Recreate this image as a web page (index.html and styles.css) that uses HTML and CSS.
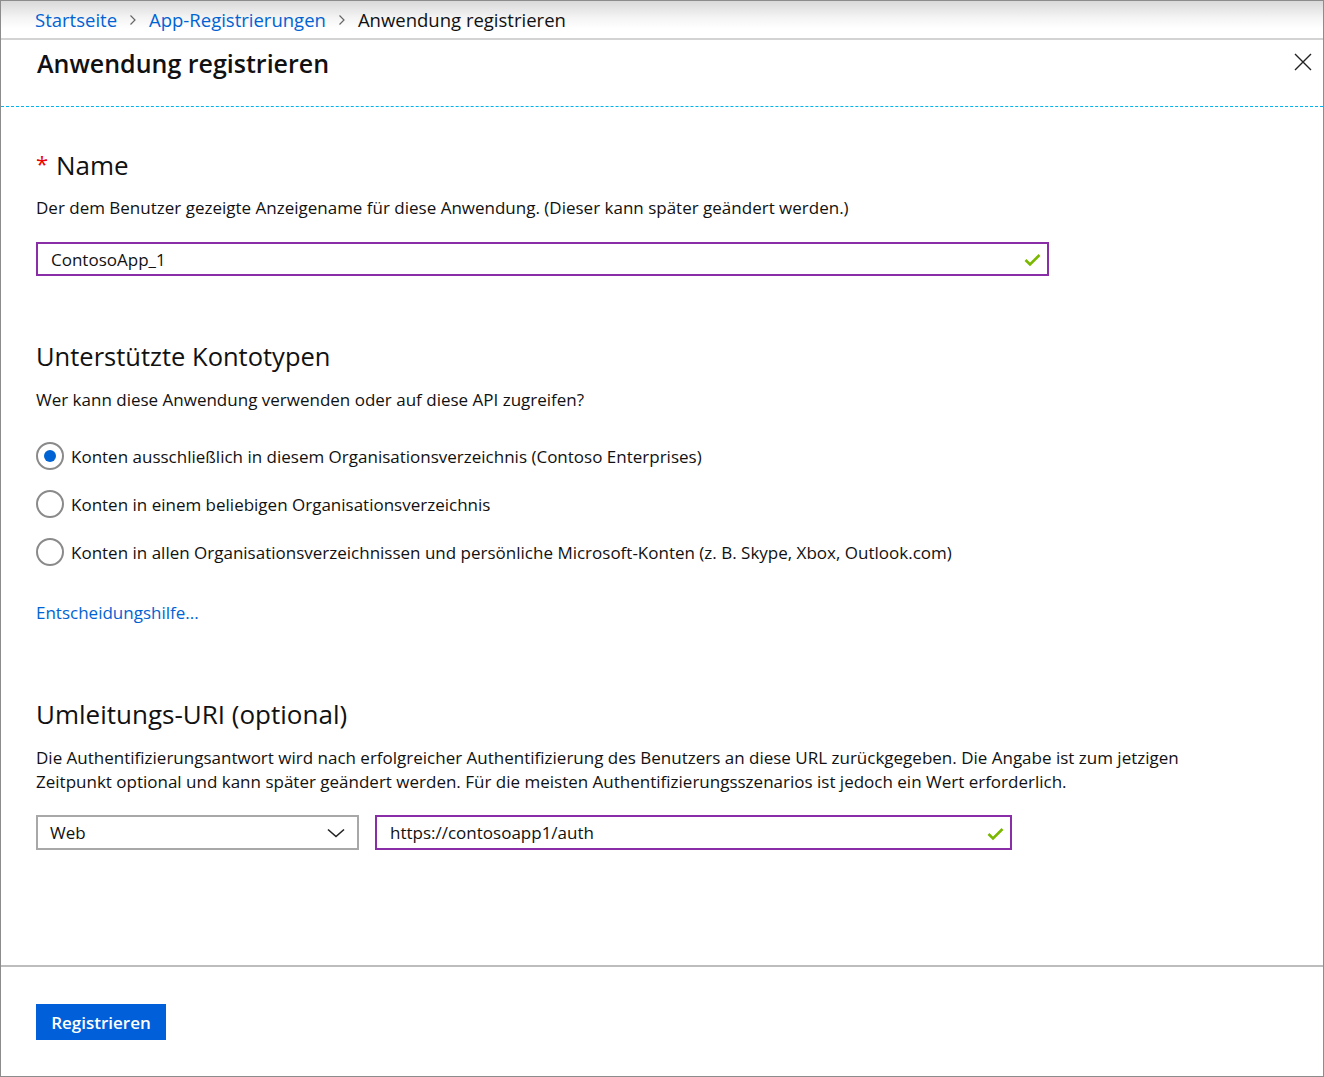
FILE: index.html
```html
<!DOCTYPE html>
<html lang="de">
<head>
<meta charset="utf-8">
<title>Anwendung registrieren</title>
<link rel="stylesheet" href="styles.css">
</head>
<body>
<div class="frame">
  <nav class="breadcrumb">
    <a class="crumb-link" href="#">Startseite</a>
    <svg class="crumb-sep" width="8" height="12" viewBox="0 0 8 12"><polyline points="1.5,1.5 6,6 1.5,10.5" fill="none" stroke="#666" stroke-width="1.2"/></svg>
    <a class="crumb-link" href="#">App-Registrierungen</a>
    <svg class="crumb-sep" width="8" height="12" viewBox="0 0 8 12"><polyline points="1.5,1.5 6,6 1.5,10.5" fill="none" stroke="#666" stroke-width="1.2"/></svg>
    <span class="crumb-current">Anwendung registrieren</span>
  </nav>
  <header class="header">
    <h1 class="title">Anwendung registrieren</h1>
    <button class="close" aria-label="Schließen">
      <svg width="18" height="18" viewBox="0 0 18 18"><path d="M1 1 L17 17 M17 1 L1 17" stroke="#222" stroke-width="1.4" fill="none"/></svg>
    </button>
  </header>
  <main class="content">
    <h2 class="section-title first"><span class="req">*</span> Name</h2>
    <p class="desc">Der dem Benutzer gezeigte Anzeigename für diese Anwendung. (Dieser kann später geändert werden.)</p>
    <div class="field field-name">
      <span class="field-text">ContosoApp_1</span>
      <svg class="check" width="17" height="14" viewBox="0 0 17 14"><polyline points="1.5,7 6,11.5 15.5,2" fill="none" stroke="#7ab800" stroke-width="2.6"/></svg>
    </div>

    <h2 class="section-title second">Unterstützte Kontotypen</h2>
    <p class="desc q">Wer kann diese Anwendung verwenden oder auf diese API zugreifen?</p>
    <div class="radios">
      <div class="radio-row"><span class="radio checked"></span><span>Konten ausschließlich in diesem Organisationsverzeichnis (Contoso Enterprises)</span></div>
      <div class="radio-row"><span class="radio"></span><span>Konten in einem beliebigen Organisationsverzeichnis</span></div>
      <div class="radio-row"><span class="radio"></span><span>Konten in allen Organisationsverzeichnissen und persönliche Microsoft-Konten (z. B. Skype, Xbox, Outlook.com)</span></div>
    </div>
    <a class="help-link" href="#">Entscheidungshilfe...</a>

    <h2 class="section-title third">Umleitungs-URI (optional)</h2>
    <p class="desc para">Die Authentifizierungsantwort wird nach erfolgreicher Authentifizierung des Benutzers an diese URL zurückgegeben. Die Angabe ist zum jetzigen Zeitpunkt optional und kann später geändert werden. Für die meisten Authentifizierungsszenarios ist jedoch ein Wert erforderlich.</p>
    <div class="uri-row">
      <div class="select">
        <span class="field-text">Web</span>
        <svg class="chev" width="18" height="10" viewBox="0 0 18 10"><polyline points="1,1.5 9,8.5 17,1.5" fill="none" stroke="#222" stroke-width="1.6"/></svg>
      </div>
      <div class="field field-uri">
        <span class="field-text">https://contosoapp1/auth</span>
        <svg class="check" width="17" height="14" viewBox="0 0 17 14"><polyline points="1.5,7 6,11.5 15.5,2" fill="none" stroke="#7ab800" stroke-width="2.6"/></svg>
      </div>
    </div>
  </main>
  <footer class="footer">
    <button class="primary">Registrieren</button>
  </footer>
</div>
</body>
</html>
```

FILE: styles.css
```css
* { box-sizing: border-box; }
html, body { margin: 0; padding: 0; }
body {
  font-family: "Open Sans", "Noto Sans", "Liberation Sans", sans-serif;
  color: #111;
  background: #fff;
}
.frame {
  width: 1324px;
  height: 1077px;
  border: 1px solid #8c8c8c;
  display: flex;
  flex-direction: column;
}
.breadcrumb {
  height: 39px;
  flex: none;
  display: flex;
  align-items: center;
  padding-left: 34px;
  background: linear-gradient(#d9d9d9 0%, #f4f4f4 45%, #fff 75%);
  border-bottom: 2px solid #d3d3d3;
  font-size: 18.5px;
}
.crumb-link { color: #0063d3; text-decoration: none; }
.crumb-current { color: #111; }
.crumb-sep { margin: 0 12px; }
.header {
  height: 67px;
  flex: none;
  display: flex;
  align-items: flex-start;
  justify-content: space-between;
  padding: 3px 10px 0 36px;
  border-bottom: 1px dashed #00b4ef;
}
.title {
  margin: 0;
  font-size: 25px;
  font-weight: 600;
  line-height: 40px;
  color: #111;
}
.close {
  border: 0;
  background: none;
  padding: 0;
  margin-top: 9px;
  width: 20px;
  height: 20px;
  display: flex;
  align-items: center;
  justify-content: center;
  cursor: pointer;
}
.content {
  flex: 1;
  padding: 0 35px;
  display: flex;
  flex-direction: column;
  align-items: flex-start;
}
.section-title {
  margin: 0;
  font-size: 26px;
  font-weight: 400;
  line-height: 34px;
  color: #111;
}
.section-title.first { margin-top: 39px; }
.section-title.second { margin-top: 63px; font-size: 25.5px; }
.section-title.third { margin-top: 72px; }
.req { color: #e00; font-size: 22px; vertical-align: 3px; margin-right: 1px; }
.desc {
  margin: 14px 0 0 0;
  font-size: 17px;
  line-height: 24px;
  color: #111;
}
.desc.q { margin-top: 15px; }
.desc.para { max-width: 1200px; margin-top: 15px; }
.field {
  height: 34px;
  border: 2px solid #8a2ea8;
  display: flex;
  align-items: center;
  justify-content: space-between;
  padding: 0 6px 0 13px;
  font-size: 17px;
}
.field-name { width: 1013px; margin-top: 22px; }
.field-text { color: #111; }
.check { margin-top: 2px; }
.radios { margin-top: 20px; display: flex; flex-direction: column; }
.radio-row {
  height: 48px;
  display: flex;
  align-items: center;
  gap: 7px;
  font-size: 17px;
}
.radio {
  width: 28px;
  height: 28px;
  border-radius: 50%;
  border: 2px solid #8a8a8a;
  display: flex;
  align-items: center;
  justify-content: center;
  flex: none;
}
.radio.checked::after {
  content: "";
  width: 12px;
  height: 12px;
  border-radius: 50%;
  background: #0063d3;
}
.help-link {
  margin-top: 25px;
  font-size: 17px;
  line-height: 24px;
  color: #0063d3;
  text-decoration: none;
}
.uri-row {
  margin-top: 21px;
  display: flex;
  gap: 16px;
}
.select {
  width: 323px;
  height: 35px;
  border: 2px solid #a8a8a8;
  display: flex;
  align-items: center;
  justify-content: space-between;
  padding: 0 12px 0 12px;
  font-size: 17px;
}
.field-uri { width: 637px; height: 35px; }
.footer {
  flex: none;
  height: 111px;
  border-top: 2px solid #bdbdbd;
  padding: 37px 0 0 35px;
}
.primary {
  width: 130px;
  height: 36px;
  border: 0;
  background: #005fd9;
  color: #fff;
  font-family: inherit;
  font-size: 17px;
  font-weight: 600;
  cursor: pointer;
}
```
